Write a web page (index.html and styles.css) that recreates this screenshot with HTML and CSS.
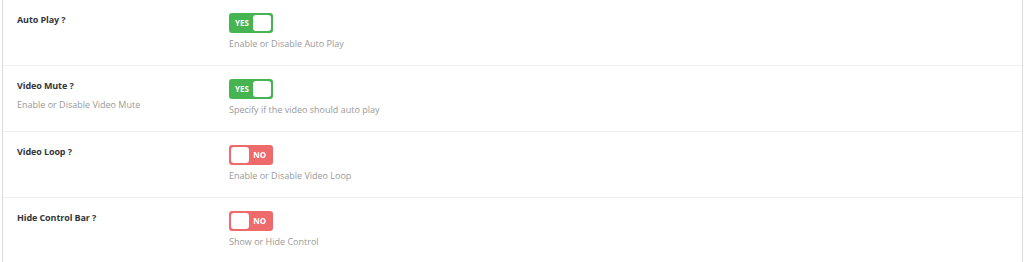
FILE: index.html
```html
<!DOCTYPE html>
<html>
<head>
<meta charset="utf-8">
<link rel="stylesheet" href="styles.css">
</head>
<body>
<div class="panel">
  <div class="row">
    <div class="label"><div class="title">Auto Play ?</div></div>
    <div class="field">
      <span class="toggle on"><span class="txt">YES</span><span class="knob"></span></span>
      <div class="desc">Enable or Disable Auto Play</div>
    </div>
  </div>
  <div class="row">
    <div class="label"><div class="title">Video Mute ?</div><div class="sub">Enable or Disable Video Mute</div></div>
    <div class="field">
      <span class="toggle on"><span class="txt">YES</span><span class="knob"></span></span>
      <div class="desc">Specify if the video should auto play</div>
    </div>
  </div>
  <div class="row">
    <div class="label"><div class="title">Video Loop ?</div></div>
    <div class="field">
      <span class="toggle off"><span class="knob"></span><span class="txt">NO</span></span>
      <div class="desc">Enable or Disable Video Loop</div>
    </div>
  </div>
  <div class="row last">
    <div class="label"><div class="title">Hide Control Bar ?</div></div>
    <div class="field">
      <span class="toggle off"><span class="knob"></span><span class="txt">NO</span></span>
      <div class="desc">Show or Hide Control</div>
    </div>
  </div>
</div>
</body>
</html>
```
FILE: styles.css
```css
html, body { margin: 0; padding: 0; background: #fff; }
body { font-family: "Open Sans", "Noto Sans", sans-serif; }
.panel {
  margin-left: 2px;
  width: 1021px;
  height: 262px;
  border-left: 1px solid #dcdcdc;
  border-right: 1px solid #dcdcdc;
  box-sizing: border-box;
  background: #fff;
}
.row {
  display: flex;
  height: 66px;
  box-sizing: border-box;
  border-bottom: 1px solid #eeeeee;
  padding-top: 13px;
}
.row.last { border-bottom: none; }
.label { width: 212px; padding-left: 14px; }
.title { font-size: 9px; font-weight: 700; color: #32373c; line-height: 14px; letter-spacing: -0.1px; }
.sub { font-size: 9px; color: #999; line-height: 14px; margin-top: 5px; }
.field { display: flex; flex-direction: column; align-items: flex-start; }
.toggle {
  display: flex;
  align-items: center;
  width: 44px;
  height: 20px;
  border-radius: 3px;
  box-sizing: border-box;
  padding: 2px;
  justify-content: space-between;
}
.toggle.on { background: #46b450; }
.toggle.off { background: #ef6b6b; }
.knob { width: 18px; height: 16px; background: #fff; border-radius: 3px; }
.txt { font-size: 8px; font-weight: 700; color: #fff; line-height: 16px; }
.toggle.on .txt { padding-left: 4px; }
.toggle.off .txt { padding-right: 5px; }
.desc { font-size: 9px; color: #999; line-height: 14px; margin-top: 4px; }
```
